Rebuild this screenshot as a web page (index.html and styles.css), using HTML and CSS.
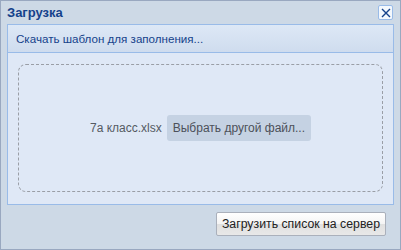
FILE: index.html
```html
<!DOCTYPE html>
<html lang="ru">
<head>
    <meta charset="UTF-8">
    <title>Загрузка</title>
    <link rel="stylesheet" href="styles.css">
</head>
<body>
    <div class="okno">
        <div class="naglowek">
            <span class="tytul">Загрузка</span>
            <span class="zamknij">
                <svg width="10" height="10" viewBox="0 0 10 10">
                    <path d="M1 1 L9 9 M9 1 L1 9" stroke="#15428b" stroke-width="1.4"/>
                </svg>
            </span>
        </div>
        <div class="panel">
            <div class="panelTytul">Скачать шаблон для заполнения...</div>
            <div class="panelTresc">
                <div class="strefa">
                    <span class="plik">7а класс.xlsx</span>
                    <span class="wybierz">Выбрать другой файл...</span>
                </div>
            </div>
        </div>
        <div class="stopka">
            <button class="wyslij">Загрузить список на сервер</button>
        </div>
    </div>
</body>
</html>
```

FILE: styles.css
```css
html, body {
    margin: 0;
    padding: 0;
}
body {
    width: 401px;
    height: 250px;
    font-family: "Liberation Sans", Arial, sans-serif;
    font-size: 12px;
}
.okno {
    box-sizing: border-box;
    width: 401px;
    height: 250px;
    border: 1px solid #99a8c0;
    background-color: #cdd9e6;
    padding: 0 6px 6px 6px;
    display: flex;
    flex-direction: column;
}
.naglowek {
    height: 23px;
    display: flex;
    align-items: center;
    justify-content: space-between;
}
.tytul {
    font-weight: bold;
    font-size: 13px;
    color: #15428b;
}
.zamknij {
    box-sizing: border-box;
    width: 15px;
    height: 15px;
    border: 1px solid #99bbe8;
    border-radius: 2px;
    background-color: #f4f8fd;
    display: flex;
    align-items: center;
    justify-content: center;
    margin-right: 1px;
}
.panel {
    border: 1px solid #99bbe8;
    height: 181px;
    box-sizing: border-box;
    display: flex;
    flex-direction: column;
}
.panelTytul {
    height: 27px;
    line-height: 27px;
    padding-left: 8px;
    font-size: 11.6px;
    color: #15428b;
    background: linear-gradient(#dde8f6, #cfdcee);
    border-bottom: 1px solid #99bbe8;
}
.panelTresc {
    flex: 1;
    background-color: #dfe8f6;
    padding: 11px 10px 12px 10px;
    display: flex;
}
.strefa {
    flex: 1;
    border: 1px dashed #9a9ea6;
    border-radius: 8px;
    display: flex;
    align-items: center;
    justify-content: center;
    gap: 5px;
}
.plik {
    color: #555a63;
}
.wybierz {
    background-color: #c5d2e3;
    color: #4c5059;
    border-radius: 3px;
    padding: 6px 6px;
}
.stopka {
    flex: 1;
    display: flex;
    justify-content: flex-end;
    align-items: center;
    padding-right: 8px;
}
.wyslij {
    font-family: "Liberation Sans", Arial, sans-serif;
    font-size: 12.3px;
    color: #222;
    height: 24px;
    padding: 0 5px;
    border: 1px solid #aab0bb;
    border-radius: 2px;
    background: linear-gradient(#ffffff 0%, #f4f4f4 50%, #e0e0e0 51%, #e8e8e8 100%);
}
```
